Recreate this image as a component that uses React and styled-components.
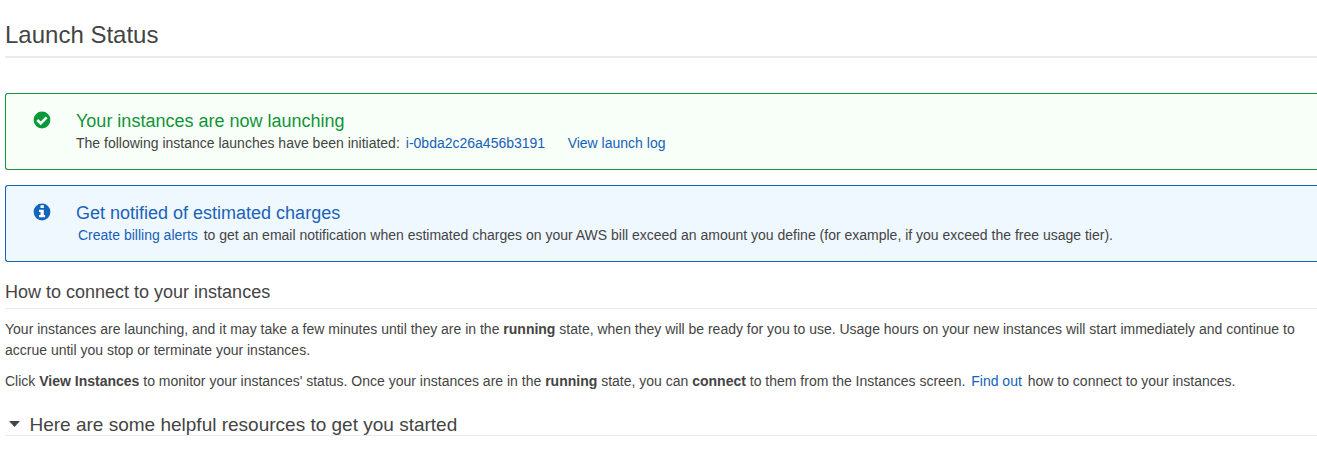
import React from "react";
import styled, { createGlobalStyle } from "styled-components";

const Global = createGlobalStyle`
  body { margin: 0; background: #fff; overflow: hidden; }
`;
const Page = styled.main`
  box-sizing: border-box;
  height: 449px;
  padding: 20px 0 0 5px;
  overflow: hidden;
  font: 14px/21px "Liberation Sans", Arial, sans-serif;
  color: #444;
`;
const Title = styled.h1`
  margin: 0 0 35px;
  height: 36px;
  border-bottom: 2px solid #eaeaea;
  font-size: 24px;
  line-height: 30px;
  font-weight: 400;
`;
const tones = {
  success: { border: "#159540", fill: "#f7fff8", text: "#129439", icon: "#079a37" },
  info: { border: "#1763b6", fill: "#f0f8ff", text: "#1a62b8", icon: "#1166bb" },
};
const Alert = styled.section`
  box-sizing: border-box;
  display: flex;
  height: 77px;
  margin-bottom: 15px;
  padding: 16px 0 0 27px;
  border: 1px solid ${(p) => tones[p.$tone].border};
  border-right: 0;
  border-radius: 3px 0 0 3px;
  background: ${(p) => tones[p.$tone].fill};
  white-space: nowrap;
`;
const AlertIcon = styled.svg`
  flex: none;
  width: 18px;
  height: 18px;
  margin: 1px 25px 0 0;
  color: ${(p) => tones[p.$tone].icon};
`;
const AlertTitle = styled.h2`
  margin: 0 0 1px;
  font-size: 18px;
  line-height: 22px;
  font-weight: 400;
  color: ${(p) => tones[p.$tone].text};
`;
const Link = styled.a`
  margin-left: ${(p) => p.$before || 0}px;
  margin-right: ${(p) => p.$after || 0}px;
  color: #1660b9;
`;
const SectionTitle = styled.h2`
  margin: 0 0 10px;
  height: 31px;
  border-bottom: 1px solid #eaeaea;
  font-size: 18px;
  line-height: 30px;
  font-weight: 400;
`;
const Paragraph = styled.p`
  margin: 0 0 10px;
  white-space: nowrap;
`;
const Disclosure = styled.h2`
  display: flex;
  align-items: center;
  gap: 9.5px;
  margin: 0;
  margin-top: 21px;
  padding-left: 4px;
  height: 22px;
  border-bottom: 1px solid #eaeaea;
  font-size: 19px;
  font-weight: 400;
`;
const Caret = styled.svg`
  width: 11px;
  height: 6px;
`;

export default function App() {
  return (
    <Page>
      <Global />
      <Title>Launch Status</Title>
      <Alert $tone="success">
        <AlertIcon $tone="success" viewBox="0 0 18 18">
          <circle cx="9" cy="9" r="8.4" fill="currentColor" />
          <path d="m4.3 9 3.4 3.4 6-6" fill="none" stroke="#fff" strokeWidth="2.7" />
        </AlertIcon>
        <div>
          <AlertTitle $tone="success">Your instances are now launching</AlertTitle>
          The following instance launches have been initiated:
          <Link $before={6}>i-0bda2c26a456b3191</Link>
          <Link $before={22.5}>View launch log</Link>
        </div>
      </Alert>
      <Alert $tone="info">
        <AlertIcon $tone="info" viewBox="0 0 18 18">
          <circle cx="9" cy="9" r="8.4" fill="currentColor" />
          <path d="M7.5 2.3h3.3v2.8H7.5zM6 6.8h4.8v5.1h1.3v2.3H6v-2.3h1.5V9H6z" fill="#fff" />
        </AlertIcon>
        <div>
          <AlertTitle $tone="info">Get notified of estimated charges</AlertTitle>
          <Link $before={2} $after={2}>Create billing alerts</Link> to get an email notification when estimated charges on your AWS bill exceed an amount you define (for example, if you exceed the free usage tier).
        </div>
      </Alert>
      <SectionTitle>How to connect to your instances</SectionTitle>
      <Paragraph>
        Your instances are launching, and it may take a few minutes until they are in the <b>running</b> state, when they will be ready for you to use. Usage hours on your new instances will start immediately and continue to
        <br />
        accrue until you stop or terminate your instances.
      </Paragraph>
      <Paragraph>
        Click <b>View Instances</b> to monitor your instances' status. Once your instances are in the <b>running</b> state, you can <b>connect</b> to them from the Instances screen. <Link $before={2} $after={2}>Find out</Link> how to connect to your instances.
      </Paragraph>
      <Disclosure>
        <Caret viewBox="0 0 11 6"><path d="M0 0h11L5.5 6z" fill="#444" /></Caret>
        Here are some helpful resources to get you started
      </Disclosure>
    </Page>
  );
}
